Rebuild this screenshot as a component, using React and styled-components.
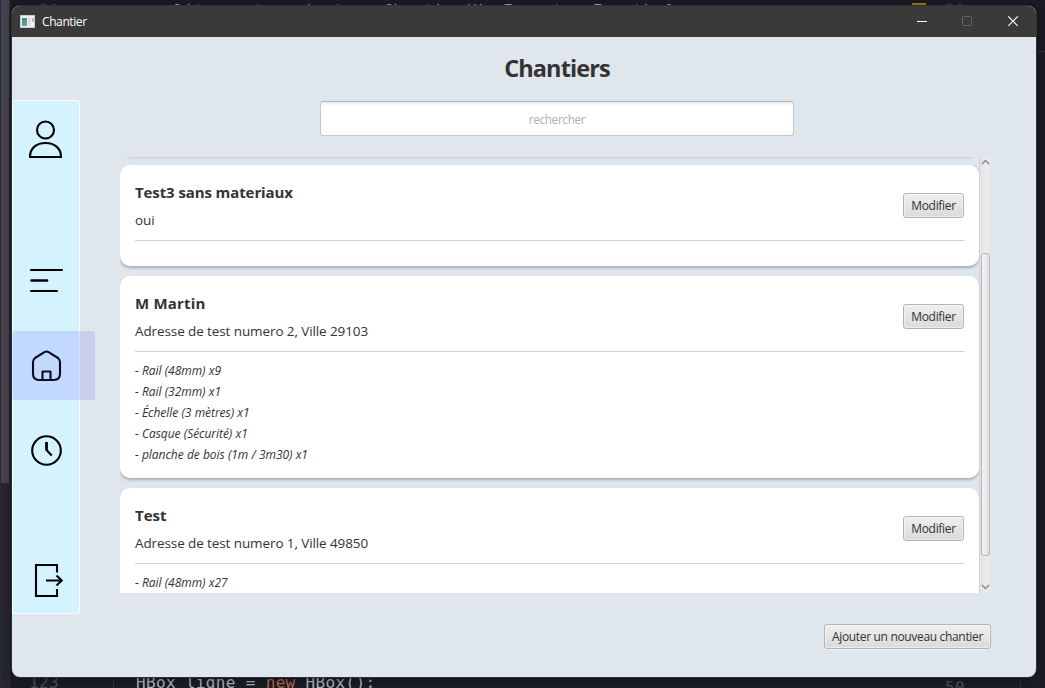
import React from "react";
import styled, { createGlobalStyle } from "styled-components";

const GlobalStyle = createGlobalStyle`
  * { box-sizing: border-box; }
  body {
    margin: 0;
    overflow: hidden;
    background: #1b1b23;
    color: #333;
    font-family: "Open Sans", "Noto Sans", sans-serif;
  }
`;

const Desktop = styled.div`
  position: relative;
  width: 1045px;
  height: 688px;
  padding: 6px 9px 11px 12px;
  overflow: hidden;
  background: #1b1b23;
`;

/* Editor visible behind the window */
const EditorEdge = styled.div`
  position: absolute;
  left: 0;
  top: 0;
  width: 10px;
  height: 688px;
  background: linear-gradient(#43434d 483px, #262630 483px);
  border-left: 1px solid #2b2b35;
  border-right: 1px solid #2b2b35;
`;

const EditorText = styled.pre`
  position: absolute;
  left: ${(p) => p.$x}px;
  top: ${(p) => p.$y}px;
  margin: 0;
  font: 16px/20px "DejaVu Sans Mono", monospace;
  letter-spacing: 0.34px;
  color: ${(p) => p.$color || "#a9adb8"};
`;

const Keyword = styled.span`
  color: #b0684f;
`;

const EditorMark = styled.div`
  position: absolute;
  left: ${(p) => p.$x}px;
  top: ${(p) => p.$y}px;
  width: ${(p) => p.$w}px;
  height: ${(p) => p.$h}px;
  background: ${(p) => p.$color || "#30303a"};
`;

const Window = styled.div`
  position: relative;
  display: flex;
  flex-direction: column;
  width: 1024px;
  height: 671px;
  overflow: hidden;
  border-radius: 8px;
  background: #e0e6ed;
  box-shadow: 0 0 0 1px #2f3136, 0 1px 8px rgba(0, 0, 0, 0.5);
`;

const TitleBar = styled.header`
  display: flex;
  align-items: center;
  flex: none;
  height: 31px;
  padding-left: 8px;
  background: #3a3a3a;
  color: #fff;
`;

const WindowName = styled.span`
  flex: 1;
  margin-left: 7px;
  font-size: 12px;
  line-height: 16px;
  letter-spacing: -0.4px;
`;

const WindowControl = styled.span`
  display: flex;
  align-items: center;
  justify-content: center;
  width: 46px;
  height: 31px;
`;

const Body = styled.div`
  display: flex;
  flex: 1;
  min-height: 0;
`;

const Sidebar = styled.nav`
  display: flex;
  flex-direction: column;
  flex: none;
  width: 68px;
  height: 514px;
  margin-top: 63px;
  padding-top: 4px;
  border: 1px solid #f7fcff;
  border-radius: 2px;
  background: #d4f3ff;
`;

const NavItem = styled.a`
  position: relative;
  display: flex;
  align-items: center;
  flex: none;
  height: ${(p) => p.$height || 69}px;
  margin-bottom: ${(p) => p.$gap || 0}px;
  padding-left: 13px;

  &::after {
    content: "";
    display: ${(p) => (p.$active ? "block" : "none")};
    position: absolute;
    left: -1px;
    top: 0;
    width: 83px;
    height: 69px;
    border-radius: 3px;
    background: rgba(90, 77, 238, 0.15);
  }
`;

const Icon = styled.svg`
  display: block;
  width: 41px;
  height: 41px;
  fill: none;
  stroke: #000;
  stroke-width: 2.1;
`;

const Main = styled.main`
  display: flex;
  flex-direction: column;
  width: 874px;
  margin-left: 40px;
`;

const PageTitle = styled.h1`
  height: 32px;
  margin: 15px 0 17px;
  text-align: center;
  font-size: 23.5px;
  line-height: 33px;
  font-weight: 700;
  letter-spacing: -0.9px;
`;

const Search = styled.input`
  flex: none;
  align-self: center;
  width: 474px;
  height: 35px;
  padding: 0;
  border: 1px solid #c6c9cc;
  border-top-color: #b5b8bb;
  border-radius: 3px;
  background: linear-gradient(#ececec, #fff 5px);
  text-align: center;
  font: 11.8px "Open Sans", sans-serif;
  letter-spacing: -0.35px;
  outline: none;

  &::placeholder { color: #b0b0b0; opacity: 1; }
`;

const ScrollPane = styled.section`
  display: flex;
  flex: none;
  width: 871px;
  height: 436px;
  margin-top: 21px;
`;

const Viewport = styled.div`
  display: flex;
  flex-direction: column;
  gap: 10px;
  width: 859px;
  overflow: hidden;
`;

const Card = styled.article`
  flex: none;
  padding: 15px;
  border-radius: 10px;
  background: #fff;
  box-shadow: 0 2px 3px rgba(0, 0, 0, 0.25);
`;

const CardAbove = styled(Card)`
  height: 50px;
  margin-top: -52px;
`;

const CardHeader = styled.div`
  display: flex;
  align-items: center;
  justify-content: space-between;
  height: 61px;
  padding-bottom: 10px;
  border-bottom: 1px solid #d0d0d0;
`;

const CardTitle = styled.h2`
  margin: 0 0 8px;
  font-size: 15px;
  line-height: 21px;
  font-weight: 700;
  letter-spacing: ${(p) => p.$tracking || 0}px;
`;

const Address = styled.p`
  margin: 0 0 -1px;
  font-size: 13.5px;
  line-height: 19px;
  letter-spacing: -0.1px;
`;

const Materials = styled.ul`
  display: flex;
  flex-direction: column;
  gap: 5px;
  margin: 10px 0 0;
  padding: 0;
  list-style: none;
`;

const Material = styled.li`
  height: 16px;
  font-size: 12px;
  line-height: 16px;
  font-style: italic;
  white-space: nowrap;
  letter-spacing: -0.05px;
  word-spacing: 0.2px;

  &:first-child { margin-top: 1px; }
`;

const Button = styled.button`
  flex: none;
  width: ${(p) => p.$width}px;
  height: 25px;
  padding: 1px 0 0;
  border: 1px solid #b3b3b3;
  border-radius: 3px;
  background: linear-gradient(#efefef, #dadada);
  box-shadow: inset 0 0 0 1px rgba(255, 255, 255, 0.45);
  color: #333;
  font: 12px/22px "Open Sans", sans-serif;
  letter-spacing: -0.33px;
  white-space: nowrap;
`;

const AddButton = styled(Button)`
  align-self: flex-end;
  margin: 31px 3px 0 0;
  box-shadow: inset 0 0 0 1px rgba(255, 255, 255, 0.45), 0 1px 0 #edf1f5;
`;

const ScrollBar = styled.div`
  display: flex;
  flex-direction: column;
  align-items: center;
  width: 12px;
  padding: 2px 1px 3px 0;
  border-left: 1px solid #d2d3d5;
  background: linear-gradient(90deg, #e3e3e3, #ececec 60%, #e6e6e8);
`;

const Thumb = styled.div`
  width: 9px;
  height: 304px;
  margin: 88px 0 28px;
  border: 1px solid #b5b5b5;
  border-radius: 3px;
  background: linear-gradient(90deg, #f5f5f5, #dedede);
`;

const Chevron = styled.svg`
  display: block;
  flex: none;
  width: 9px;
  height: 6px;
  fill: none;
  stroke: #8b8b8b;
  stroke-width: 1.5;
`;

const sites = [
  { name: "Test3 sans materiaux", tracking: -0.1, address: "oui", items: [] },
  {
    name: "M Martin",
    tracking: 0.18,
    address: "Adresse de test numero 2, Ville 29103",
    items: [
      "- Rail (48mm) x9",
      "- Rail (32mm) x1",
      "- Échelle (3 mètres) x1",
      "- Casque (Sécurité) x1",
      "- planche de bois (1m / 3m30) x1",
    ],
  },
  {
    name: "Test",
    address: "Adresse de test numero 1, Ville 49850",
    items: ["- Rail (48mm) x27"],
  },
];

function SiteCard({ site }) {
  return (
    <Card>
      <CardHeader>
        <div>
          <CardTitle $tracking={site.tracking}>{site.name}</CardTitle>
          <Address>{site.address}</Address>
        </div>
        <Button $width={61}>Modifier</Button>
      </CardHeader>
      <Materials>
        {site.items.map((item) => (
          <Material key={item}>{item}</Material>
        ))}
      </Materials>
    </Card>
  );
}

function AppIcon() {
  return (
    <svg width="15" height="13" viewBox="0 0 15 13">
      <defs>
        <linearGradient id="pane" x1="0" y1="0" x2="0.6" y2="1">
          <stop offset="0" stopColor="#4b79a8" />
          <stop offset="1" stopColor="#55b07a" />
        </linearGradient>
      </defs>
      <rect width="15" height="13" fill="#c9cdcf" />
      <rect x="1" y="1" width="13" height="11" fill="#f3f3f3" />
      <rect x="2" y="3" width="5" height="8" fill="url(#pane)" />
      <rect x="8" y="3" width="3" height="8" fill="#dcdcdc" />
      <rect x="12" y="3" width="2" height="4" fill="#9cc9b9" />
    </svg>
  );
}

export default function App() {
  return (
    <Desktop>
      <GlobalStyle />
      <EditorEdge />
      <EditorText $x={39} $y={1} $color="#4b4d5a">30</EditorText>
      <EditorText $x={134} $y={1}>
        {"    lit  carte  ajouter  Chantier(HexFormat   Event) {"}
      </EditorText>
      <EditorText $x={945} $y={1} $color="#4b4d5a">30</EditorText>
      <EditorMark $x={912} $y={3} $w={14} $h={2} $color="#b07a18" />
      <EditorMark $x={1037} $y={51} $w={8} $h={1} />
      <EditorMark $x={113} $y={677} $w={1} $h={11} />
      <EditorMark $x={1020} $y={677} $w={1} $h={11} />
      <EditorText $x={29} $y={673} $color="#4b4d5a">123</EditorText>
      <EditorText $x={136} $y={673}>
        HBox ligne = <Keyword>new</Keyword> HBox();
      </EditorText>
      <EditorText $x={945} $y={678} $color="#4b4d5a">50</EditorText>

      <Window>
        <TitleBar>
          <AppIcon />
          <WindowName>Chantier</WindowName>
          <WindowControl>
            <svg width="11" height="11" stroke="#fff"><path d="M1 5.5H11" /></svg>
          </WindowControl>
          <WindowControl>
            <svg width="11" height="11" fill="none" stroke="#636363">
              <rect x="0.5" y="0.5" width="9" height="9" rx="1" />
            </svg>
          </WindowControl>
          <WindowControl>
            <svg width="11" height="11" stroke="#fff" strokeWidth="1.1">
              <path d="M0.3 0.5L9.7 9.9M9.7 0.5L0.3 9.9" />
            </svg>
          </WindowControl>
        </TitleBar>
        <Body>
          <Sidebar>
            <NavItem $gap={72}>
              <Icon>
                <circle cx="19.5" cy="11" r="8.5" />
                <path d="M4 38C4 29 10.5 24 19.5 24S35 29 35 38Z" />
              </Icon>
            </NavItem>
            <NavItem $gap={16}>
              <Icon strokeLinecap="round">
                <path d="M5 10H36M5 31H31" />
                <path d="M5.5 20.5H21" strokeWidth="2.6" />
              </Icon>
            </NavItem>
            <NavItem $active $gap={16}>
              <Icon strokeLinejoin="round">
                <path d="M18.4 7.2L9 13Q7 14.5 7 17V28.5Q7 35 13 35H28Q34 35 34 28.5V17Q34 14.5 32 13L22.6 7.2Q20.5 5.8 18.4 7.2Z" />
                <path d="M16.5 35V26.5H24.5V35" />
              </Icon>
            </NavItem>
            <NavItem $gap={63}>
              <Icon>
                <circle cx="20.5" cy="20.5" r="14.3" />
                <path d="M20.5 12V20.5" strokeWidth="2.8" />
                <path d="M20.5 20L25.7 25.5" />
              </Icon>
            </NavItem>
            <NavItem $height={65}>
              <Icon>
                <path d="M31 12.5V5H10V36H31V29" />
                <path d="M20 20.5H36M30.5 15.5L35.7 20.5L30.5 25.5" />
              </Icon>
            </NavItem>
          </Sidebar>
          <Main>
            <PageTitle>Chantiers</PageTitle>
            <Search placeholder="rechercher" />
            <ScrollPane>
              <Viewport>
                <CardAbove />
                {sites.map((site) => (
                  <SiteCard key={site.name} site={site} />
                ))}
              </Viewport>
              <ScrollBar>
                <Chevron><path d="M1 5L4.5 1.5L8 5" /></Chevron>
                <Thumb />
                <Chevron><path d="M1 1L4.5 4.5L8 1" /></Chevron>
              </ScrollBar>
            </ScrollPane>
            <AddButton $width={167}>Ajouter un nouveau chantier</AddButton>
          </Main>
        </Body>
      </Window>
    </Desktop>
  );
}
